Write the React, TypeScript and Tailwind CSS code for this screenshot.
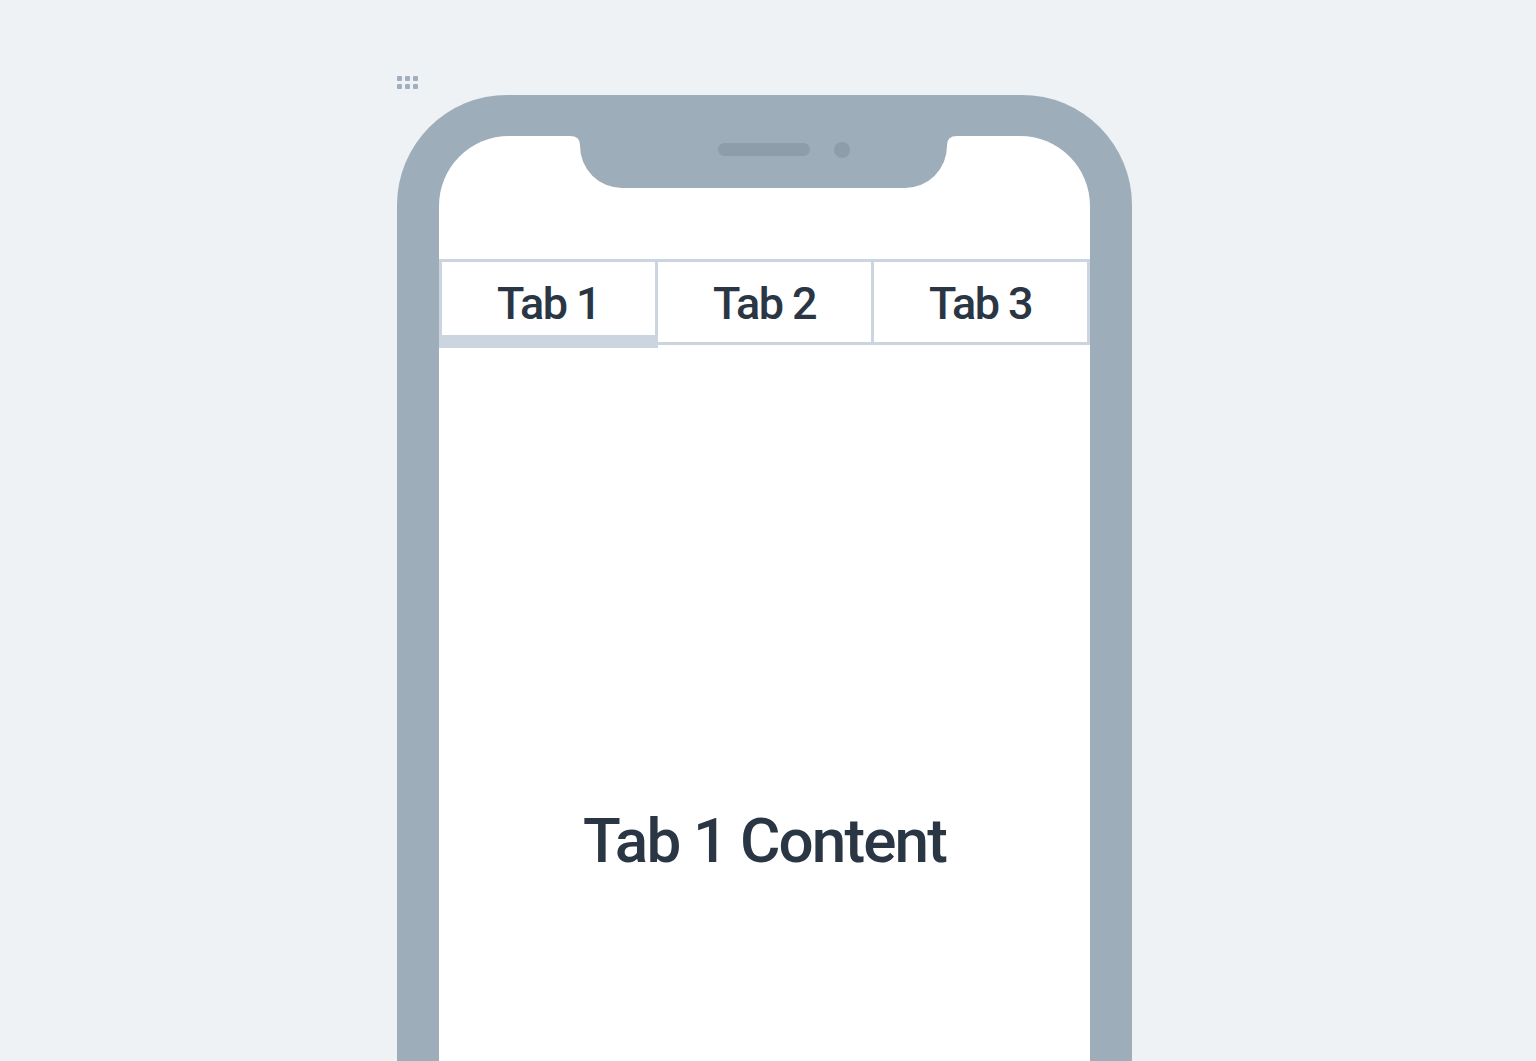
import React, { useState } from 'react'

const tabs = ['Tab 1', 'Tab 2', 'Tab 3']

const Grip = () => (
  <div className="grid w-[21px] grid-cols-3 gap-x-[3.5px] gap-y-[3.5px]">
    {Array.from({ length: 6 }).map((_, i) => (
      <span key={i} className="h-[4.5px] w-[4.5px] rounded-[1px] bg-[#a0aec0]" />
    ))}
  </div>
)

// notch drawn over the top edge of the screen
const Notch = () => (
  <svg className="absolute left-0 top-0" width="651" height="60" viewBox="0 0 651 60">
    <path
      d="M131 0 Q141 0 141 9 L141 10 A42 42 0 0 0 183 52 L466 52 A42 42 0 0 0 508 10 L508 9 Q508 0 518 0 Z"
      fill="#9eadba"
    />
    <rect x="279" y="7" width="92" height="13" rx="6.5" fill="#8d9daa" />
    <circle cx="403" cy="14" r="8" fill="#8d9daa" />
  </svg>
)

export default function App() {
  const [active, setActive] = useState(0)

  return (
    <main
      className="h-screen overflow-hidden bg-[#eef2f5] text-[#2a3644]"
      style={{ fontFamily: 'Roboto, "Noto Sans", sans-serif' }}
    >
      <div className="pl-[397px] pt-[76px]">
        <Grip />

        {/* phone frame */}
        <div className="mt-[6px] h-[1100px] w-[735px] rounded-t-[110px] bg-[#9eadba] px-[42px] pt-[41px]">
          <div className="relative h-full rounded-t-[70px] bg-white">
            <Notch />

            {/* tab bar */}
            <div className="flex items-start pt-[123px]">
              {tabs.map((tab, i) => (
                <button
                  key={tab}
                  onClick={() => setActive(i)}
                  className={
                    i === active
                      ? 'flex h-[89px] flex-1 items-start justify-center border-[3px] border-b-[13px] border-[#cbd5e0] pt-[19px] text-[45px] font-medium leading-none tracking-[-0.035em]'
                      : 'flex h-[86px] flex-1 items-start justify-center border-[3px] border-[#cbd5e0] pt-[19px] text-[45px] font-medium leading-none tracking-[-0.035em]'
                  }
                  style={i > 0 ? { marginLeft: -3 } : undefined}
                >
                  {tab}
                </button>
              ))}
            </div>

            {/* content */}
            <div className="flex h-[986px] items-center justify-center">
              <h1 className="text-[62px] font-medium leading-none tracking-[-0.03em]">
                {tabs[active]} Content
              </h1>
            </div>
          </div>
        </div>
      </div>
    </main>
  )
}
